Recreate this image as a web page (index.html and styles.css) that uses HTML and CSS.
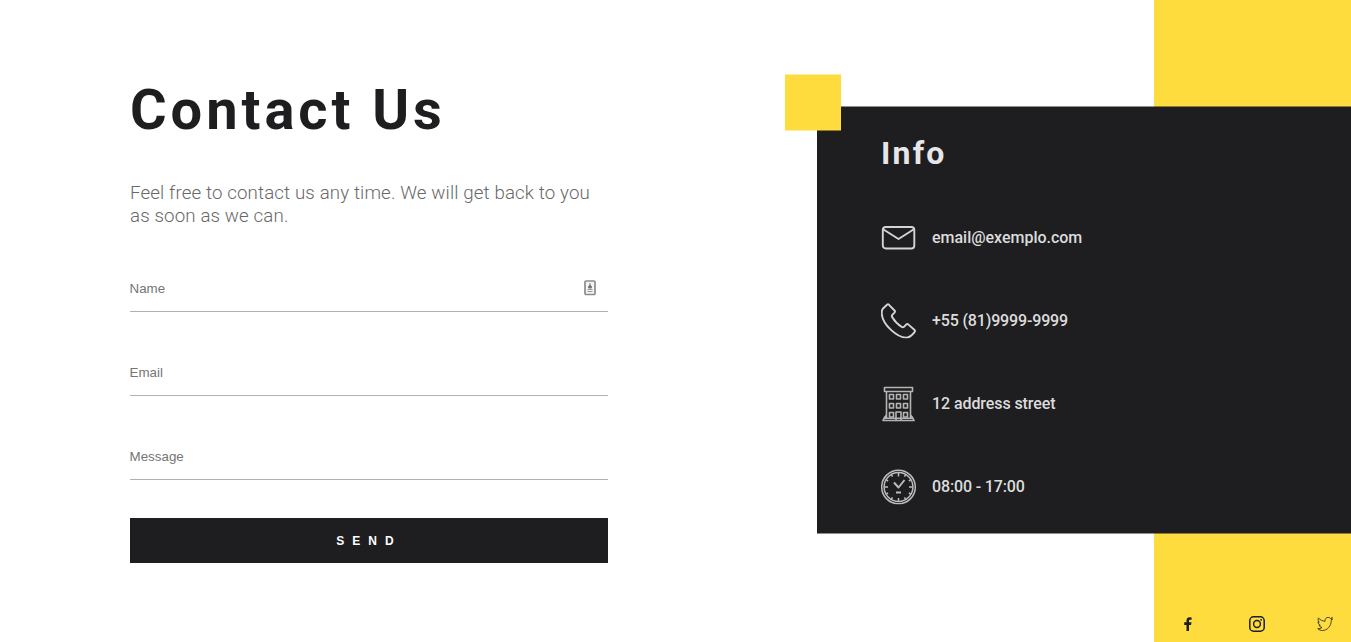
FILE: index.html
```html
<!DOCTYPE html>
<html lang="en">
<head>
<meta charset="utf-8">
<title>Contact Us</title>
<link rel="stylesheet" href="styles.css">
</head>
<body>
<main class="page">
  <section class="contact">
    <h1 class="title"><span>Contact Us</span></h1>
    <p class="lead"><span>Feel free to contact us any time. We will get back to you</span><br><span>as soon as we can.</span></p>
    <form class="form">
      <label class="field"><span class="label">Name</span>
        <svg class="autofill" viewBox="0 0 12 16"><rect x="1" y="1" width="10" height="13.5" rx="1" fill="#f4f4f4" stroke="#8c8c8c" stroke-width="1.7"/><path d="M6 3v2.500M4.600 8V6.300L6 5l1.400 1.300V8z" fill="#777" stroke="#777"/><path d="M3.500 9.500h5M3.500 11.500h5" stroke="#999" stroke-width="1.200"/></svg>
      </label>
      <label class="field"><span class="label">Email</span></label>
      <label class="field"><span class="label">Message</span></label>
      <button class="send" type="button"><span>SEND</span></button>
    </form>
  </section>
  <div class="stripe">
    <nav class="social">
      <svg class="facebook" viewBox="0 0 16 16"><path d="M6.500 15V9H4.200V6.200h2.300V4.500C6.500 2.300 7.700 1.300 9.600 1.300l2 .1v2.400h-1.400c-1 0-1.200.5-1.200 1.200v1.200h2.500L11.100 9H9v6z" fill="#1e1e20"/></svg>
      <svg class="instagram" viewBox="0 0 16 16" fill="none" stroke="#1e1e20" stroke-width="1.500"><rect x=".8" y=".8" width="14.400" height="14.400" rx="3.800"/><circle cx="8" cy="8" r="3.400"/><circle cx="12.200" cy="3.800" r=".9" fill="#1e1e20" stroke="none"/></svg>
      <svg class="twitter" viewBox="0 0 16 16" fill="none" stroke="#1e1e20" stroke-width=".8" stroke-linejoin="round"><path d="M.8 12.700c1.700.1 3-.3 4.200-1.200-1.500-.2-2.500-1-2.900-2.200h1.200C1.800 8.600 1 7.500 1 5.900l1.300.3C1 5 .8 3.500 1.500 2c1.700 2 3.900 3.100 6.500 3.300-.3-2.300 1.200-3.900 3.100-3.900 1 0 1.800.4 2.400 1l1.900-.8-1.200 1.900 1.400-.4-1.400 1.600c.1 5.300-3.900 9.800-8.900 9.800-1.700 0-3.100-.6-4.500-1.800z"/></svg>
    </nav>
  </div>
  <section class="info">
    <div class="accent"></div>
    <h2 class="info-title"><span>Info</span></h2>
    <ul class="items">
      <li class="item"><svg class="icon" viewBox="0 -0.500 36 36"><rect x="1.800" y="7" width="31.500" height="21.500" rx="3"/><path d="M2.500 9.500l15 9.500 15-9.500"/></svg><span class="mail">email@exemplo.com</span></li>
      <li class="item"><svg class="icon" viewBox="0.500 -0.500 36 36"><path d="M2.300 5.800l4.200-4q1-.9 2 0l5.500 5.700q1 1.100 0 2.200l-2.200 2.200q-.8.900-.2 2.200 3.700 6.300 9.700 9.900 1.200.7 2.200-.2l2.100-2.200q1.200-1.200 2.400 0l5.800 5.100q1.300 1.200.2 2.400c-2.300 3-4.900 5.700-8.500 5.500C16.500 34.400 2.500 22 1.300 11.300c-.2-2.300-.1-4.300 1-5.500z"/></svg><span class="phone">+55 (81)9999-9999</span></li>
      <li class="item"><svg class="icon building" viewBox="0.500 -0.500 36 36"><path d="M4 1.500h28v4H4zM6 6v26M30 6v26M2.500 34.500l1-2.200h29l1 2.200zM2 34.700h32M3.500 32l2.500-3M32.500 32L30 29"/><path d="M9 8.500h4V13H9zM16 8.500h4V13h-4zM23 8.500h4V13h-4zM9 17.500h4V22H9zM16 17.500h4V22h-4zM23 17.500h4V22h-4zM9 26.500h4V31H9zM23 26.500h4V31h-4zM15.500 34v-8h5v8"/></svg><span class="address">12 address street</span></li>
      <li class="item"><svg class="icon clock" viewBox="0.500 -0.500 36 36"><circle cx="18" cy="18" r="16.800"/><circle cx="18" cy="18" r="14.400"/><path d="M18 4v3.500M18 29v3M4 18h3.500M28.500 18H32M11 5.900l1 1.700M25 5.900l-1 1.700M5.900 11l1.700 1M30.100 11l-1.700 1M5.900 25l1.700-1M30.100 25l-1.700-1M11 30l1-1.700M25 30l-1-1.700"/><path d="M13.500 13.500L18 18.500l6-7.500" stroke-width="1.900"/><path d="M15.500 23.500h5" stroke-width="2"/></svg><span class="hours">08:00 - 17:00</span></li>
    </ul>
  </section>
</main>
</body>
</html>
```
FILE: styles.css
```css
* { box-sizing: border-box; }
body { margin: 0; background: #fff; font-family: Roboto, "Liberation Sans", sans-serif; color: #1e1e20; }
.page {
  display: grid;
  grid-template-columns: 130px 478px 209px 337px 197px;
  grid-template-rows: 642px;
  height: 642px;
  overflow: hidden;
}
.contact { grid-column: 2; grid-row: 1; padding-top: 77px; }
.title { margin: 0; font-size: 56px; line-height: 66px; font-weight: 700; letter-spacing: 3.95px; white-space: nowrap; }
.lead { margin: 39px 0 0; font-size: 18.72px; line-height: 23px; font-weight: 300; color: #686868; letter-spacing: .13px; white-space: nowrap; }
.form { margin-top: 36px; }
.field {
  display: flex;
  justify-content: space-between;
  align-items: center;
  height: 48px;
  margin-bottom: 36px;
  padding-right: 12px;
  border-bottom: 1px solid #b0b0b2;
  font: 13.33px "Liberation Sans", sans-serif;
  letter-spacing: .03px;
  color: #757575;
}
.label { padding-top: 2px; margin-left: -.5px; }
.autofill { width: 12px; height: 16px; }
.send {
  display: block;
  width: 100%;
  height: 45px;
  margin-top: 38px;
  padding: 0;
  border: 0;
  background: #1e1e20;
  color: #fff;
  font: 700 12px "Liberation Sans", sans-serif;
  letter-spacing: 8px;
}
.stripe { grid-column: 5; grid-row: 1; display: flex; align-items: flex-end; background: #ffdc3e; }
.social { display: flex; width: 100%; justify-content: space-between; padding: 0 18px 10px 26px; }
.social svg { width: 16px; height: 16px; }
.info {
  position: relative;
  grid-column: 4 / 6;
  grid-row: 1;
  align-self: start;
  height: 427px;
  margin-top: 320px;
  padding: 27px 64px;
  background: #1e1e20;
  color: #e6e6e9;
  transform: translateY(-50%);
}
.accent { position: absolute; top: -32px; left: -32px; width: 56px; height: 56px; background: #ffdc3e; }
.info-title { margin: 0; font-size: 32px; line-height: 38px; letter-spacing: 2.2px; }
.items { display: grid; gap: 47px; margin: 48px 0 0; padding: 0; list-style: none; }
.item { display: flex; align-items: center; gap: 15px; height: 36px; font-size: 16px; font-weight: 500; letter-spacing: -.08px; color: #dcdcdc; white-space: nowrap; }
.item span { padding-bottom: 2px; }
.icon { width: 36px; height: 36px; fill: none; stroke: #d4d4d4; stroke-width: 1.9; stroke-linejoin: round; }
.mail { letter-spacing: -.02px; }
.phone, .hours { letter-spacing: -.15px; }
.building { stroke: #b5b5b5; stroke-width: 1.6; }
.clock { stroke: #bcbcbc; stroke-width: 1.5; }
```
